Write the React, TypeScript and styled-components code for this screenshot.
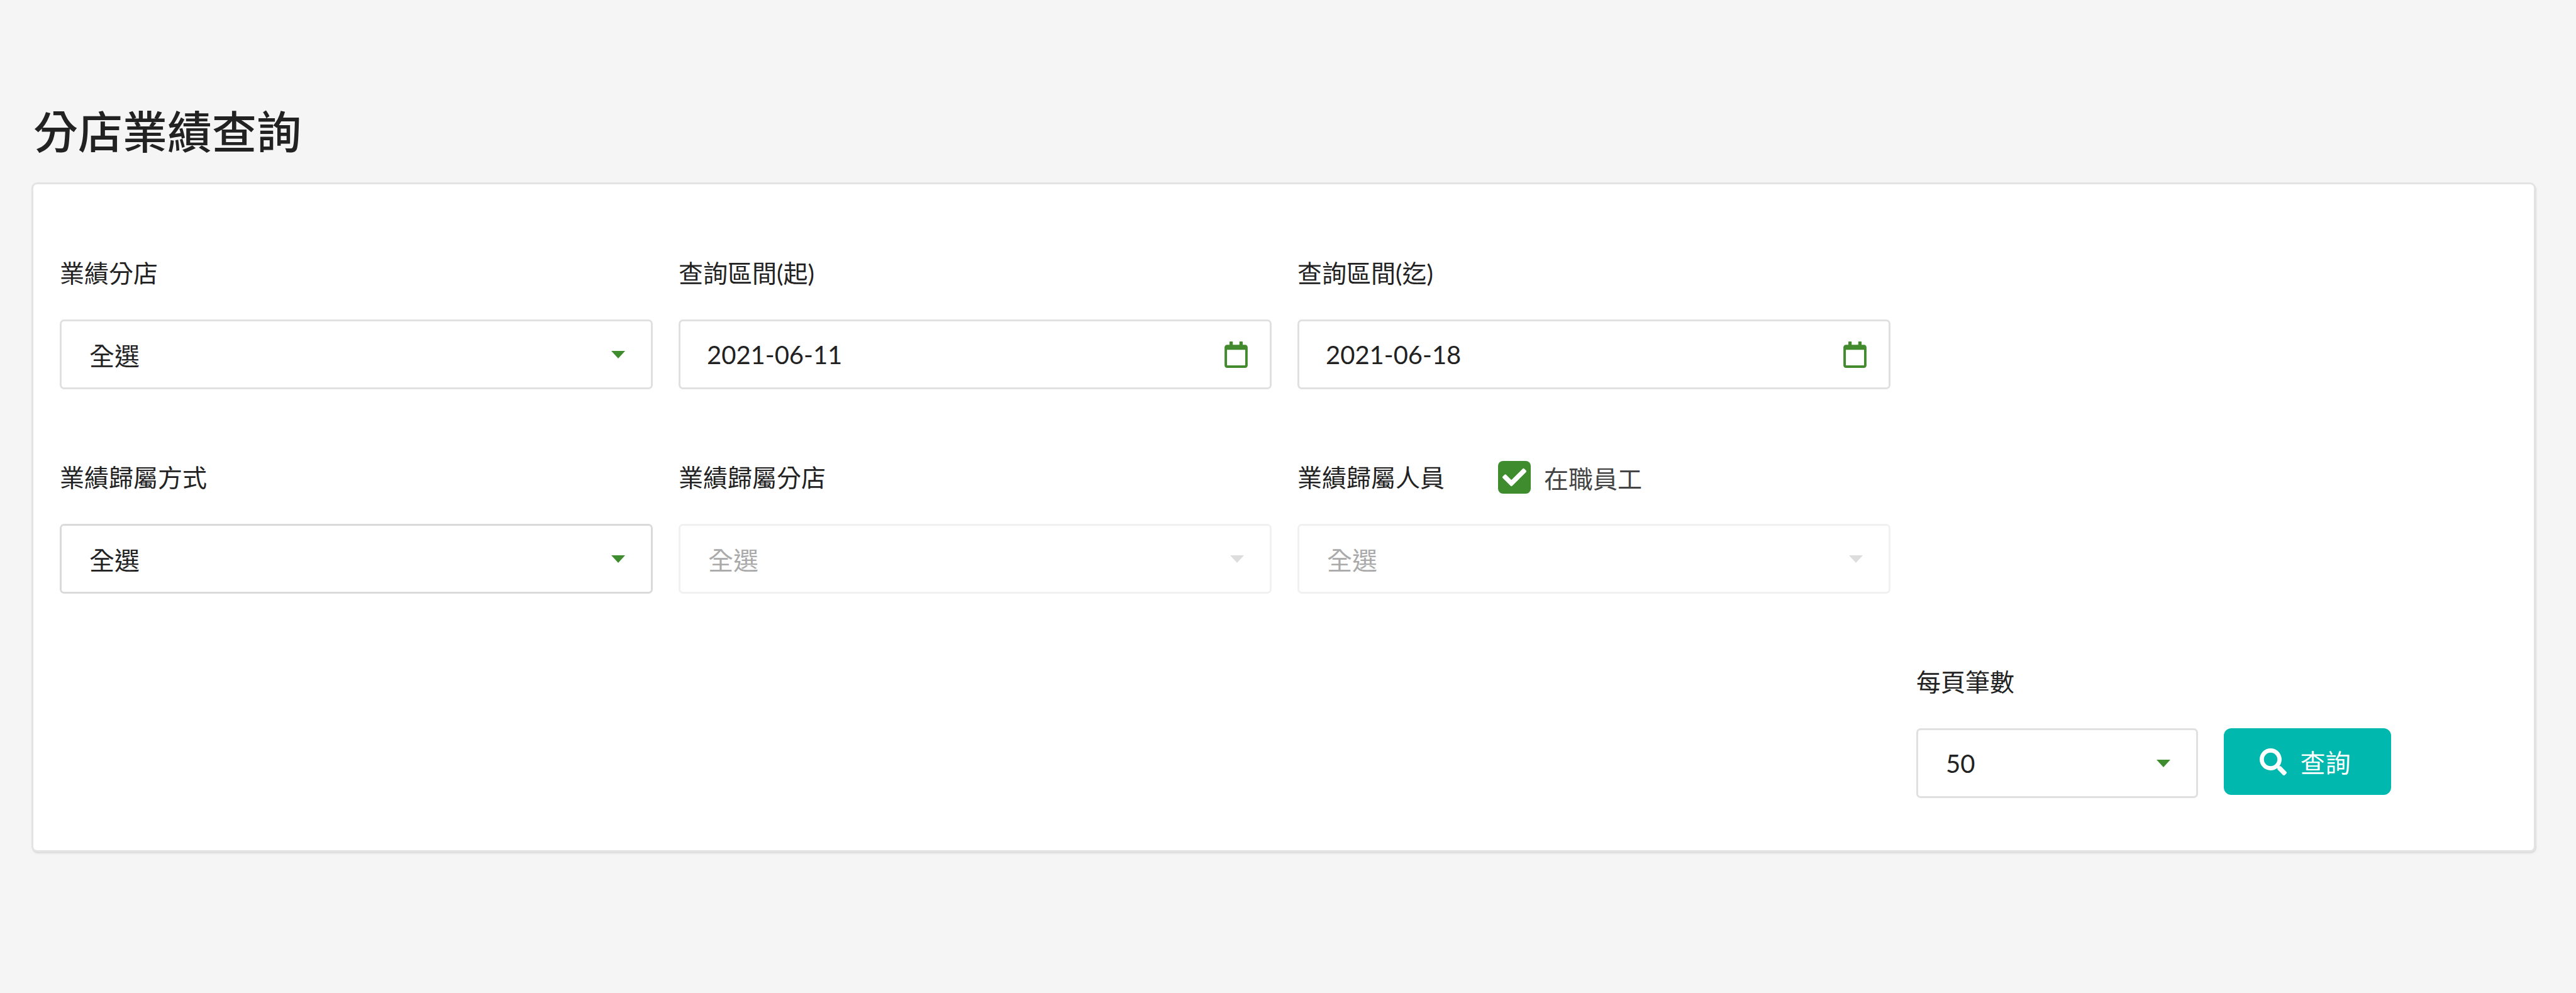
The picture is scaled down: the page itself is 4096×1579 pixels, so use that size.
import React, { FC } from 'react';
import styled, { createGlobalStyle } from 'styled-components';
import { FaCheck, FaRegCalendar, FaSearch } from 'react-icons/fa';

const GlobalStyle = createGlobalStyle`
  html, body {
    margin: 0;
    padding: 0;
    background: #f5f5f5;
  }
  body {
    font-family: Lato, "Noto Sans CJK TC", "Noto Sans", sans-serif;
    color: #222;
  }
  * { box-sizing: border-box; }
`;

const Page = styled.div`
  width: 4096px;
  height: 1579px;
  overflow: hidden;
  padding: 167px 67px 0 53px;
`;

const Title = styled.h1`
  margin: 0 0 42px;
  font-size: 71px;
  line-height: 84px;
  font-weight: 500;
  color: #222;
`;

const Card = styled.section`
  background: #fff;
  border-radius: 6px;
  box-shadow: 0 0 0 3px #e3e3e3, 1px 2px 0 3px #dfdfdf, 1px 3px 4px 3px rgba(0, 0, 0, 0.04);
  padding: 119px 39px 83px 42px;
`;

const FormGrid = styled.div`
  display: grid;
  grid-template-columns: repeat(4, 943px);
  column-gap: 41px;
  row-gap: 118px;
`;

const Field = styled.div<{ $col?: number }>`
  grid-column: ${({ $col }) => $col ?? 'auto'};
  min-width: 0;
`;

const LabelRow = styled.div`
  display: flex;
  align-items: center;
  height: 44px;
  margin-bottom: 52px;
`;

const Label = styled.label`
  font-size: 39px;
  line-height: 44px;
  color: #222;
`;

const CheckWrap = styled.span`
  display: inline-flex;
  align-items: center;
  margin-left: 85px;
  gap: 21px;
  font-size: 39px;
  color: #444;
`;

const CheckBox = styled.span`
  display: inline-flex;
  align-items: center;
  justify-content: center;
  width: 52px;
  height: 52px;
  border-radius: 8px;
  background: #3f8c2e;
  color: #fff;
  font-size: 38px;
`;

const Control = styled.div<{ $disabled?: boolean; $strong?: boolean }>`
  display: flex;
  align-items: center;
  justify-content: space-between;
  height: 111px;
  padding: 0 41px 0 42px;
  background: #fff;
  border: 3px solid ${({ $disabled, $strong }) => ($disabled ? '#f1f1f1' : $strong ? '#dadada' : '#e0e0e0')};
  border-radius: 7px;
  font-size: 40px;
  color: ${({ $disabled }) => ($disabled ? '#aaa' : '#222')};
`;

const SelectValue = styled.span`
  margin-left: 2px;
`;

const Arrow = styled.span<{ $disabled?: boolean }>`
  width: 0;
  height: 0;
  border-left: 11px solid transparent;
  border-right: 11px solid transparent;
  border-top: 12px solid ${({ $disabled }) => ($disabled ? '#ddd' : '#3f8c2e')};
`;

const DateIcon = styled(FaRegCalendar)`
  width: 37px;
  height: 42px;
  margin-right: -6px;
  color: #438a2f;
`;

const PagerRow = styled.div`
  display: flex;
  gap: 41px;
`;

const PagerSelect = styled(Control)`
  width: 448px;
`;

const SearchButton = styled.button`
  display: flex;
  align-items: center;
  justify-content: center;
  gap: 22px;
  width: 266px;
  height: 106px;
  padding: 0 8px 0 0;
  border: 0;
  border-radius: 12px;
  background: #00b8ad;
  color: #fff;
  font-family: inherit;
  font-size: 40px;
  svg { width: 43px; height: 43px; }
`;

interface SelectProps {
  label: string;
  value?: string;
  disabled?: boolean;
  strong?: boolean;
}

const SelectField: FC<SelectProps> = ({ label, value = '全選', disabled, strong }) => (
  <Field>
    <LabelRow><Label>{label}</Label></LabelRow>
    <Control $disabled={disabled} $strong={strong}>
      <SelectValue>{value}</SelectValue>
      <Arrow $disabled={disabled} />
    </Control>
  </Field>
);

const DateField: FC<{ label: string; value: string }> = ({ label, value }) => (
  <Field>
    <LabelRow><Label>{label}</Label></LabelRow>
    <Control>
      <span>{value}</span>
      <DateIcon />
    </Control>
  </Field>
);

const App = () => (
  <Page>
    <GlobalStyle />
    <Title>分店業績查詢</Title>
    <Card>
      <FormGrid>
        <SelectField label="業績分店" />
        <DateField label="查詢區間(起)" value="2021-06-11" />
        <DateField label="查詢區間(迄)" value="2021-06-18" />
        <Field />
        <SelectField label="業績歸屬方式" strong />
        <SelectField label="業績歸屬分店" disabled />
        <Field>
          <LabelRow>
            <Label>業績歸屬人員</Label>
            <CheckWrap>
              <CheckBox><FaCheck /></CheckBox>
              在職員工
            </CheckWrap>
          </LabelRow>
          <Control $disabled>
            <SelectValue>全選</SelectValue>
            <Arrow $disabled />
          </Control>
        </Field>
        <Field />
        <Field $col={4}>
          <LabelRow><Label>每頁筆數</Label></LabelRow>
          <PagerRow>
            <PagerSelect>
              <SelectValue>50</SelectValue>
              <Arrow />
            </PagerSelect>
            <SearchButton>
              <FaSearch />
              查詢
            </SearchButton>
          </PagerRow>
        </Field>
      </FormGrid>
    </Card>
  </Page>
);

export default App;
